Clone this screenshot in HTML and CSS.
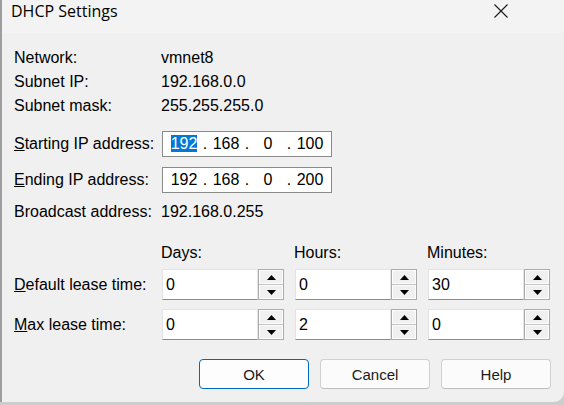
FILE: index.html
```html
<!DOCTYPE html>
<html>
<head>
<meta charset="utf-8">
<link rel="stylesheet" href="styles.css">
</head>
<body>
<div class="window">
  <div class="titlebar">
    <span class="title">DHCP Settings</span>
    <svg class="close" width="14" height="14" viewBox="0 0 14 14"><path d="M0.5 0.5 L13.5 13.5 M13.5 0.5 L0.5 13.5" stroke="#1a1a1a" stroke-width="1.1" fill="none"/></svg>
  </div>
  <div class="content">
    <div class="info">
      <div class="row"><span class="lbl">Network:</span><span class="val">vmnet8</span></div>
      <div class="row"><span class="lbl">Subnet IP:</span><span class="val">192.168.0.0</span></div>
      <div class="row"><span class="lbl">Subnet mask:</span><span class="val">255.255.255.0</span></div>
      <div class="row ip-row row-start"><span class="lbl"><u>S</u>tarting IP address:</span>
        <div class="ipbox"><span class="oct"><span class="sel">192</span></span><span class="dot">.</span><span class="oct">168</span><span class="dot">.</span><span class="oct">0</span><span class="dot">.</span><span class="oct">100</span></div>
      </div>
      <div class="row ip-row row-end"><span class="lbl"><u>E</u>nding IP address:</span>
        <div class="ipbox"><span class="oct">192</span><span class="dot">.</span><span class="oct">168</span><span class="dot">.</span><span class="oct">0</span><span class="dot">.</span><span class="oct">200</span></div>
      </div>
      <div class="row row-bcast"><span class="lbl">Broadcast address:</span><span class="val">192.168.0.255</span></div>
    </div>

    <div class="lease-grid lease-head">
      <span></span><span class="head">Days:</span><span class="head">Hours:</span><span class="head">Minutes:</span>
    </div>
    <div class="lease-grid lease-rows">
      <span class="lbl"><u>D</u>efault lease time:</span>
      <div class="spinner"><div class="edit">0</div><div class="spin"><div class="spin-btn"><svg width="9" height="5" viewBox="0 0 9 5"><polygon points="0,5 9,5 4.5,0" fill="#000"/></svg></div><div class="spin-btn"><svg width="9" height="5" viewBox="0 0 9 5"><polygon points="0,0 9,0 4.5,5" fill="#000"/></svg></div></div></div>
      <div class="spinner"><div class="edit">0</div><div class="spin"><div class="spin-btn"><svg width="9" height="5" viewBox="0 0 9 5"><polygon points="0,5 9,5 4.5,0" fill="#000"/></svg></div><div class="spin-btn"><svg width="9" height="5" viewBox="0 0 9 5"><polygon points="0,0 9,0 4.5,5" fill="#000"/></svg></div></div></div>
      <div class="spinner"><div class="edit">30</div><div class="spin"><div class="spin-btn"><svg width="9" height="5" viewBox="0 0 9 5"><polygon points="0,5 9,5 4.5,0" fill="#000"/></svg></div><div class="spin-btn"><svg width="9" height="5" viewBox="0 0 9 5"><polygon points="0,0 9,0 4.5,5" fill="#000"/></svg></div></div></div>

      <span class="lbl"><u>M</u>ax lease time:</span>
      <div class="spinner"><div class="edit">0</div><div class="spin"><div class="spin-btn"><svg width="9" height="5" viewBox="0 0 9 5"><polygon points="0,5 9,5 4.5,0" fill="#000"/></svg></div><div class="spin-btn"><svg width="9" height="5" viewBox="0 0 9 5"><polygon points="0,0 9,0 4.5,5" fill="#000"/></svg></div></div></div>
      <div class="spinner"><div class="edit">2</div><div class="spin"><div class="spin-btn"><svg width="9" height="5" viewBox="0 0 9 5"><polygon points="0,5 9,5 4.5,0" fill="#000"/></svg></div><div class="spin-btn"><svg width="9" height="5" viewBox="0 0 9 5"><polygon points="0,0 9,0 4.5,5" fill="#000"/></svg></div></div></div>
      <div class="spinner"><div class="edit">0</div><div class="spin"><div class="spin-btn"><svg width="9" height="5" viewBox="0 0 9 5"><polygon points="0,5 9,5 4.5,0" fill="#000"/></svg></div><div class="spin-btn"><svg width="9" height="5" viewBox="0 0 9 5"><polygon points="0,0 9,0 4.5,5" fill="#000"/></svg></div></div></div>
    </div>

    <div class="buttons">
      <button class="btn btn-default">OK</button>
      <button class="btn">Cancel</button>
      <button class="btn">Help</button>
    </div>
  </div>
</div>
</body>
</html>
```
FILE: styles.css
```css
* { box-sizing: border-box; }
html, body { margin: 0; padding: 0; }
body {
  width: 564px;
  height: 405px;
  overflow: hidden;
  background: #cdcdcd;
  font-family: "Liberation Sans", Arial, sans-serif;
  font-size: 16px;
  color: #000;
}
.window {
  width: 564px;
  height: 402px;
  background: #f0f0f0;
  border-left: 2px solid #9e9e9e;
  border-bottom-right-radius: 10px;
  display: flex;
  flex-direction: column;
}
.titlebar {
  height: 33px;
  flex: none;
  background: #f3f3f3;
  display: flex;
  align-items: flex-start;
  padding-left: 9px;
}
.title {
  font-family: "Open Sans", sans-serif;
  font-size: 16px;
  line-height: 22px;
  color: #000;
}
.close {
  margin-left: auto;
  margin-top: 4px;
  margin-right: 56px;
}
.content {
  padding: 13px 13px 0 12px;
}
.row {
  display: grid;
  grid-template-columns: 147px auto;
  align-items: center;
  height: 24px;
  line-height: 24px;
}
.ip-row { height: 26px; }
.row-start { margin-top: 13px; }
.row-end { margin-top: 10px; }
.row-bcast { margin-top: 7px; }
.lbl { white-space: nowrap; line-height: 24px; }
.ipbox {
  margin-left: 1px;
  width: 170px;
  height: 26px;
  border: 1px solid #8a8a8a;
  background: #fff;
  display: flex;
  padding-left: 6px;
  line-height: 24px;
}
.oct { width: 30px; text-align: center; }
.dot { width: 12px; text-align: center; }
.sel { background: #0078d7; color: #fff; }

.lease-grid {
  display: grid;
  grid-template-columns: 137px 122px 122px 122px;
  column-gap: 11px;
}
.lease-head {
  margin-top: 17px;
  line-height: 24px;
}
.head { margin-left: -1px; }
.lease-rows {
  margin-top: 4px;
  row-gap: 9px;
  align-items: center;
}
.spinner {
  display: flex;
  height: 31px;
}
.edit {
  width: 96px;
  background: #fff;
  border: 1px solid #e4e4e4;
  border-bottom-color: #8a8a8a;
  padding-left: 3px;
  line-height: 29px;
}
.spin {
  width: 26px;
  border: 1px solid #ababab;
  display: flex;
  flex-direction: column;
  background: #f0f0f0;
}
.spin-btn {
  flex: 1;
  display: flex;
  align-items: center;
  justify-content: center;
  box-shadow: inset 0 0 0 1px #fdfdfd;
}
.spin-btn + .spin-btn { border-top: 1px solid #c4c4c4; }

.buttons {
  display: flex;
  justify-content: flex-end;
  gap: 11px;
  margin-top: 19px;
}
.btn {
  width: 110px;
  height: 30px;
  border: 1px solid #d0d0d0;
  border-bottom-color: #bdbdbd;
  border-radius: 4px;
  background: #fbfbfb;
  font-family: "Liberation Sans", Arial, sans-serif;
  font-size: 15px;
  color: #1a1a1a;
  padding: 0;
}
.btn-default {
  border-color: #0067c0;
  background: #fdfdfd;
}
```
